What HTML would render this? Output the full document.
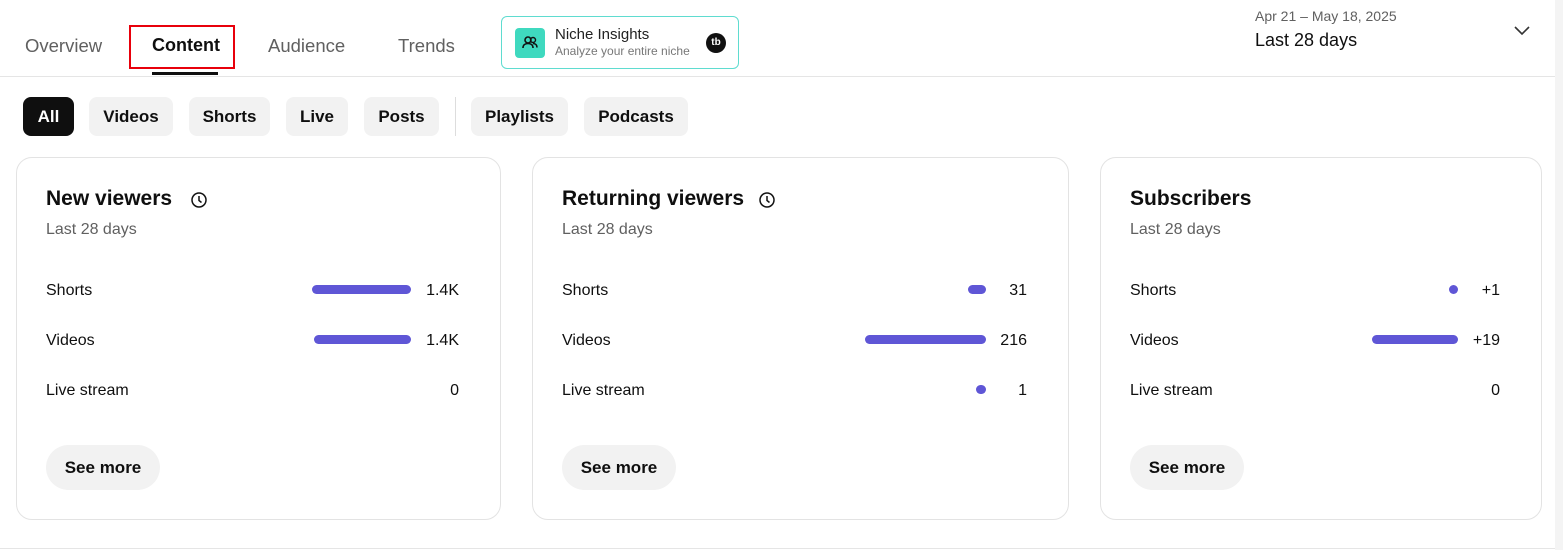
<!DOCTYPE html><html><head><style>
body{margin:0;width:1563px;height:550px;background:#fff;font-family:"Liberation Sans",Arial,sans-serif;position:relative;overflow:hidden;color:#0f0f0f}
.a{position:absolute;white-space:nowrap}
.tab{font-size:18.5px;color:#606060;top:35px}
.chip{position:absolute;top:97px;height:39px;line-height:39px;border-radius:8px;background:#f2f2f2;font-size:17px;font-weight:bold;text-align:center}
.card{position:absolute;top:157px;height:363px;border:1px solid #e3e3e3;border-radius:16px;box-sizing:border-box}
.t{font-size:21px;font-weight:bold;top:187px}
.s{font-size:16px;color:#606060;top:221px}
.l{font-size:16px;}
.v{font-size:16px;text-align:right}
.bar{position:absolute;height:9px;background:#5f56d6;border-radius:5px}
.btn{position:absolute;top:445px;width:114px;height:45px;border-radius:23px;background:#f2f2f2;font-size:17px;font-weight:bold;text-align:center;line-height:45px}
</style></head><body>
<div class="a tab" style="left:25px">Overview</div>
<div class="a tab" style="left:152px;color:#0f0f0f;font-weight:bold;font-size:18px">Content</div>
<div class="a" style="left:129px;top:25px;width:102px;height:40px;border:2.5px solid #e8000b"></div>
<div class="a" style="left:152px;top:72px;width:66px;height:3px;background:#0f0f0f"></div>
<div class="a tab" style="left:268px">Audience</div>
<div class="a tab" style="left:398px">Trends</div>
<div class="a" style="left:501px;top:16px;width:238px;height:53px;border:1.5px solid #5fdcd0;border-radius:6px;box-sizing:border-box"></div>
<div class="a" style="left:515px;top:28px;width:30px;height:30px;background:#3fd9bf;border-radius:4px"><svg width="30" height="30" viewBox="0 0 30 30"><circle cx="13" cy="12" r="3" fill="none" stroke="#111" stroke-width="1.6"/><circle cx="18" cy="12" r="2.5" fill="none" stroke="#111" stroke-width="1.4"/><path d="M8 20c0-3 2-4.5 5-4.5s5 1.5 5 4.5M18 15.5c2.5 0 4 1.5 4 4" fill="none" stroke="#111" stroke-width="1.6"/></svg></div>
<div class="a" style="left:555px;top:26px;font-size:15px;color:#222">Niche Insights</div>
<div class="a" style="left:555px;top:44px;font-size:12px;color:#777">Analyze your entire niche</div>
<div class="a" style="left:706px;top:33px;width:20px;height:20px;border-radius:50%;background:#111;color:#fff;font-size:10px;font-weight:bold;text-align:center;line-height:20px">tb</div>
<div class="a" style="left:1255px;top:8px;font-size:14px;color:#606060">Apr 21 – May 18, 2025</div>
<div class="a" style="left:1255px;top:30px;font-size:18px">Last 28 days</div>
<svg class="a" style="left:1513px;top:24px" width="18" height="12"><path d="M2 3l7 7 7-7" fill="none" stroke="#333" stroke-width="1.6"/></svg>
<div class="a" style="left:0;top:76px;width:1555px;height:1px;background:#e5e5e5"></div>
<div class="a" style="left:1555px;top:0;width:8px;height:550px;background:#f4f4f4"></div>
<div class="chip" style="left:23px;width:51px;background:#0f0f0f;color:#fff">All</div>
<div class="chip" style="left:89px;width:84px">Videos</div>
<div class="chip" style="left:189px;width:81px">Shorts</div>
<div class="chip" style="left:286px;width:62px">Live</div>
<div class="chip" style="left:364px;width:75px">Posts</div>
<div class="a" style="left:455px;top:97px;width:1px;height:39px;background:#ddd"></div>
<div class="chip" style="left:471px;width:97px">Playlists</div>
<div class="chip" style="left:584px;width:104px">Podcasts</div>

<div class="card" style="left:16px;width:485px"></div>
<div class="card" style="left:532px;width:537px"></div>
<div class="card" style="left:1100px;width:442px"></div>

<div class="a t" style="left:46px">New viewers</div>
<svg class="a" style="left:190px;top:191px" width="18" height="18"><circle cx="9" cy="9" r="7" fill="none" stroke="#111" stroke-width="1.5"/><path d="M9 5v4.5l2.5 2" fill="none" stroke="#111" stroke-width="1.5"/></svg>
<div class="a s" style="left:46px">Last 28 days</div>
<div class="a t" style="left:562px">Returning viewers</div>
<svg class="a" style="left:758px;top:191px" width="18" height="18"><circle cx="9" cy="9" r="7" fill="none" stroke="#111" stroke-width="1.5"/><path d="M9 5v4.5l2.5 2" fill="none" stroke="#111" stroke-width="1.5"/></svg>
<div class="a s" style="left:562px">Last 28 days</div>
<div class="a t" style="left:1130px">Subscribers</div>
<div class="a s" style="left:1130px">Last 28 days</div>

<div class="a l" style="left:46px;top:282px">Shorts</div><div class="a l" style="left:46px;top:332px">Videos</div><div class="a l" style="left:46px;top:382px">Live stream</div>
<div class="a l" style="left:562px;top:282px">Shorts</div><div class="a l" style="left:562px;top:332px">Videos</div><div class="a l" style="left:562px;top:382px">Live stream</div>
<div class="a l" style="left:1130px;top:282px">Shorts</div><div class="a l" style="left:1130px;top:332px">Videos</div><div class="a l" style="left:1130px;top:382px">Live stream</div>

<div class="bar" style="left:312px;top:285px;width:99px"></div>
<div class="bar" style="left:314px;top:335px;width:97px"></div>
<div class="a v" style="right:1104px;top:282px">1.4K</div>
<div class="a v" style="right:1104px;top:332px">1.4K</div>
<div class="a v" style="right:1104px;top:382px">0</div>

<div class="bar" style="left:968px;top:285px;width:18px"></div>
<div class="bar" style="left:865px;top:335px;width:121px"></div>
<div class="bar" style="left:976px;top:385px;width:10px"></div>
<div class="a v" style="right:536px;top:282px">31</div>
<div class="a v" style="right:536px;top:332px">216</div>
<div class="a v" style="right:536px;top:382px">1</div>

<div class="bar" style="left:1449px;top:285px;width:9px"></div>
<div class="bar" style="left:1372px;top:335px;width:86px"></div>
<div class="a v" style="right:63px;top:282px">+1</div>
<div class="a v" style="right:63px;top:332px">+19</div>
<div class="a v" style="right:63px;top:382px">0</div>

<div class="btn" style="left:46px">See more</div>
<div class="btn" style="left:562px">See more</div>
<div class="btn" style="left:1130px">See more</div>
<div class="a" style="left:0;top:548px;width:1555px;height:1px;background:#e5e5e5"></div>
</body></html>
